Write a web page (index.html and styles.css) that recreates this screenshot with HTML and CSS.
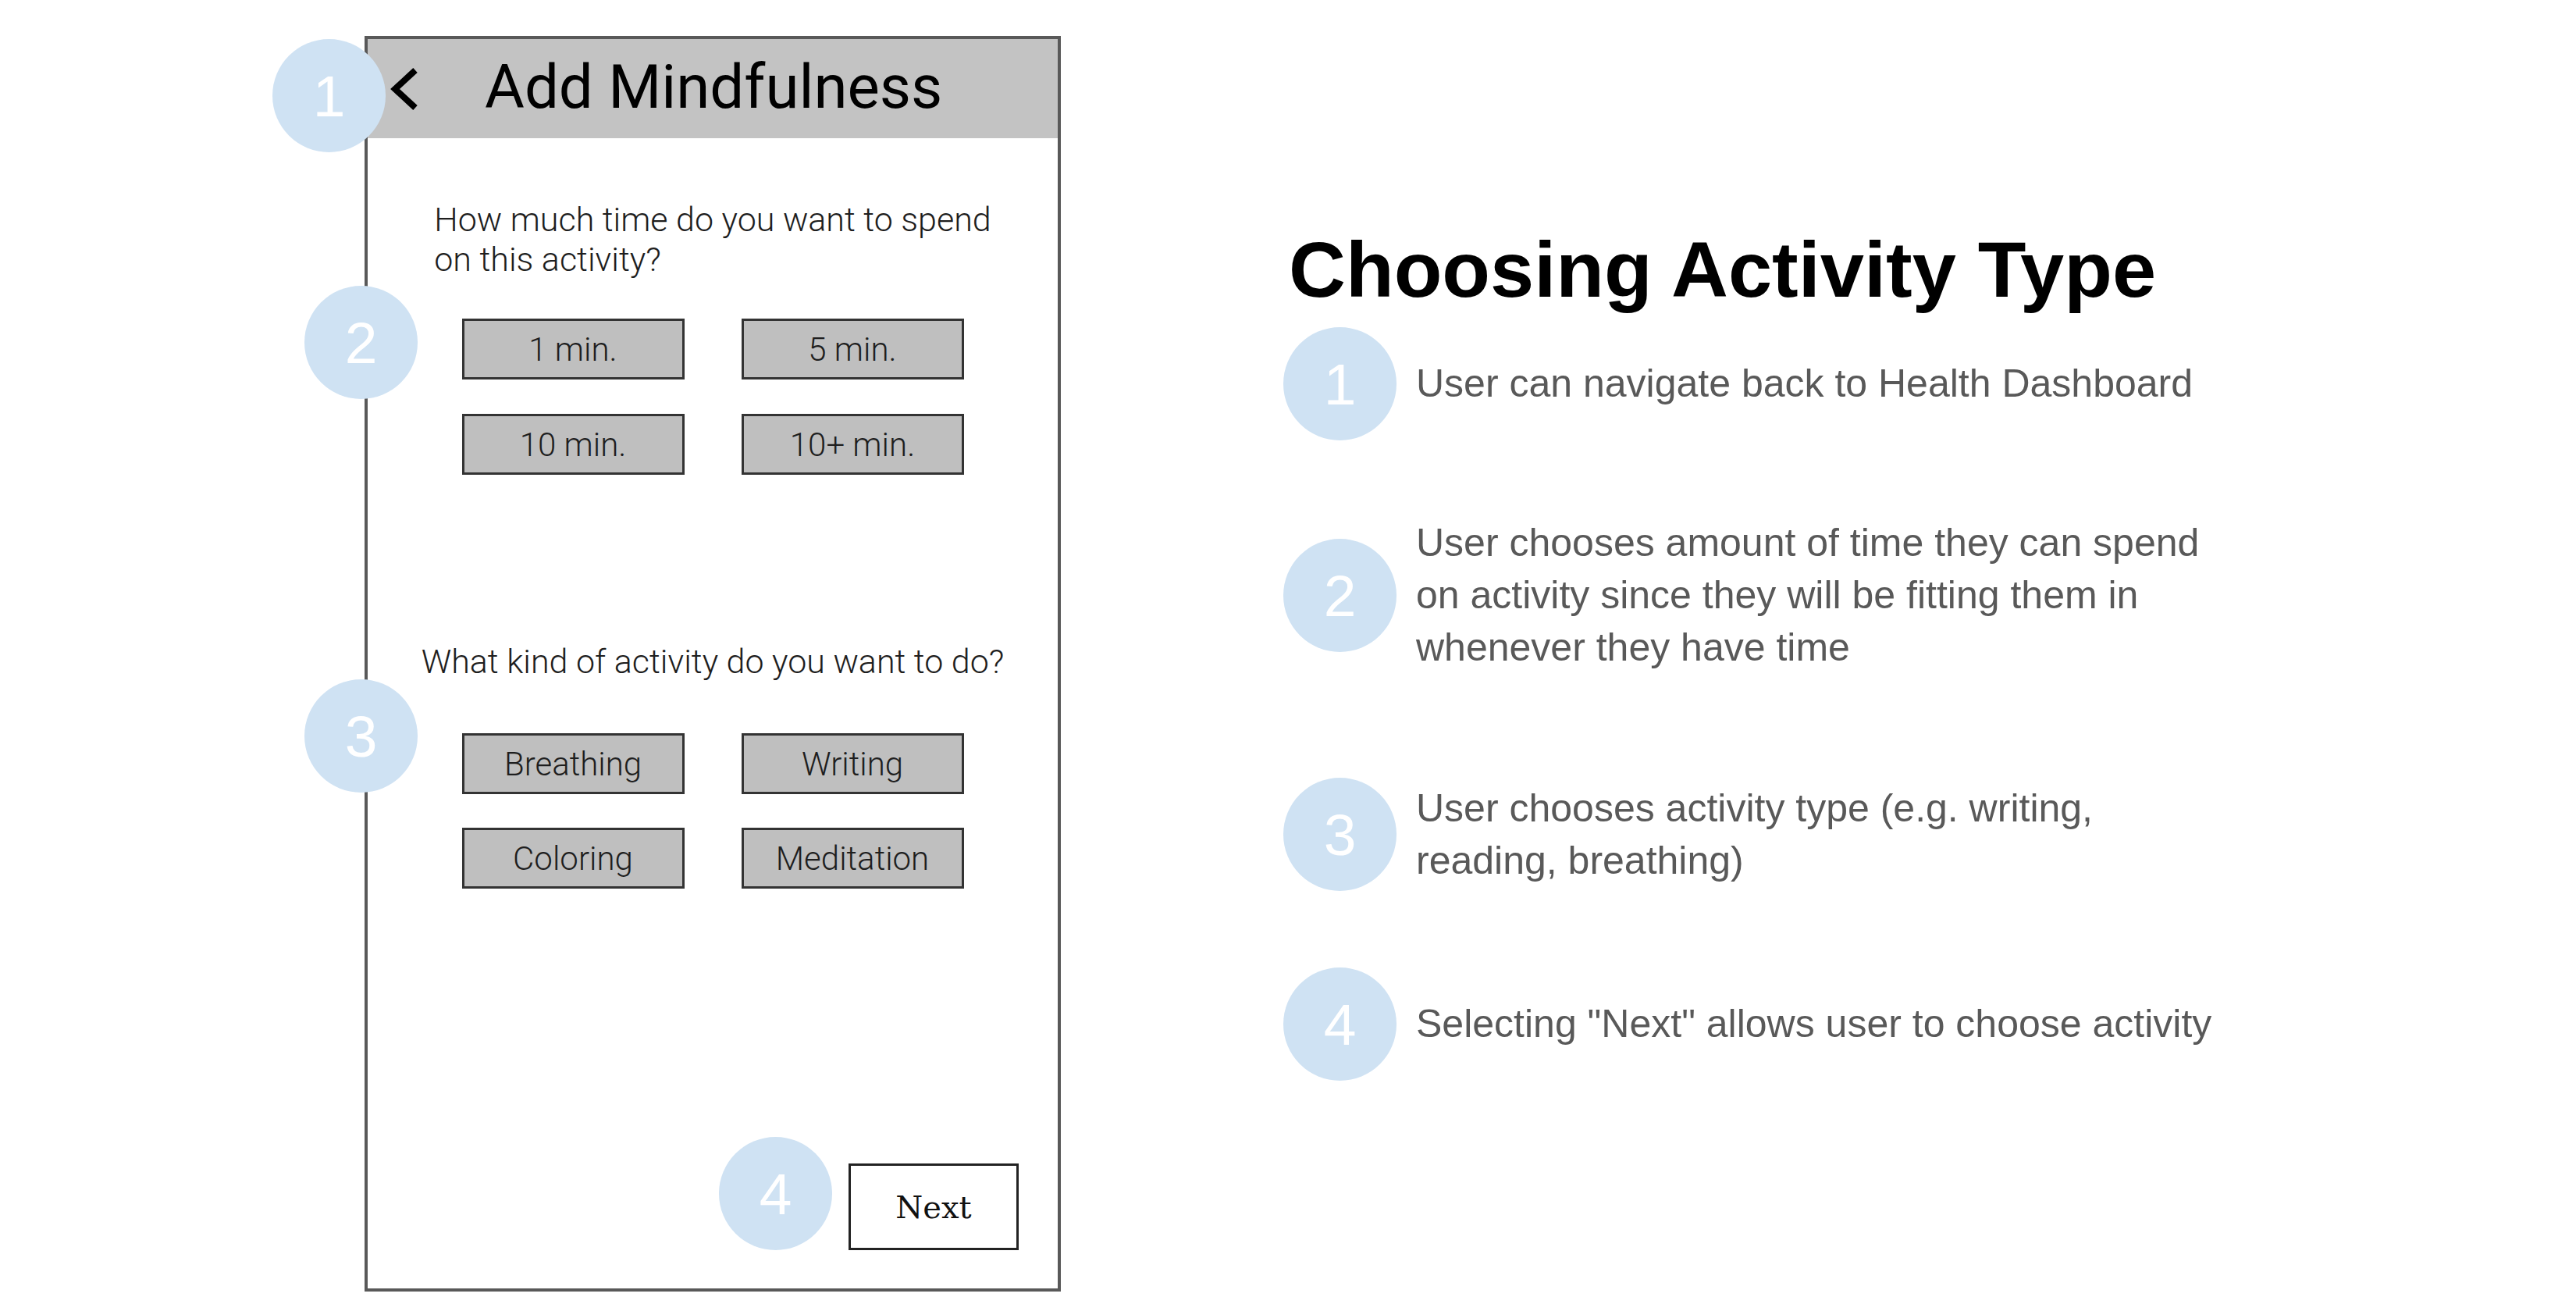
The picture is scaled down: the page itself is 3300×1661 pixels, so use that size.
FILE: index.html
```html
<!DOCTYPE html>
<html lang="en">
<head>
<meta charset="utf-8">
<title>Choosing Activity Type</title>
<link rel="stylesheet" href="styles.css">
</head>
<body>
<main class="page">
  <section class="phone">
    <header class="phone-header">
      <svg class="back" width="36" height="54" viewBox="0 0 36 54" aria-hidden="true">
        <polyline points="32,3 6,27 32,51" fill="none" stroke="#000" stroke-width="8" stroke-linejoin="miter"/>
      </svg>
      <h2 class="phone-title">Add Mindfulness</h2>
    </header>
    <div class="phone-body">
      <p class="question question-time">How much time do you want to spend<br>on this activity?</p>
      <div class="choices choices-time">
        <div class="choice">1 min.</div>
        <div class="choice">5 min.</div>
        <div class="choice">10 min.</div>
        <div class="choice">10+ min.</div>
      </div>
      <p class="question question-kind">What kind of activity do you want to do?</p>
      <div class="choices choices-kind">
        <div class="choice">Breathing</div>
        <div class="choice">Writing</div>
        <div class="choice">Coloring</div>
        <div class="choice">Meditation</div>
      </div>
      <div class="phone-footer">
        <div class="next-btn">Next</div>
      </div>
    </div>
    <span class="badge badge-1">1</span>
    <span class="badge badge-2">2</span>
    <span class="badge badge-3">3</span>
    <span class="badge badge-4">4</span>
  </section>

  <section class="notes">
    <h1 class="notes-title">Choosing Activity Type</h1>
    <ul class="steps">
      <li class="step">
        <span class="num">1</span>
        <p class="step-text">User can navigate back to Health Dashboard</p>
      </li>
      <li class="step">
        <span class="num">2</span>
        <p class="step-text">User chooses amount of time they can spend<br>on activity since they will be fitting them in<br>whenever they have time</p>
      </li>
      <li class="step step-spaced">
        <span class="num">3</span>
        <p class="step-text">User chooses activity type (e.g. writing,<br>reading, breathing)</p>
      </li>
      <li class="step">
        <span class="num">4</span>
        <p class="step-text">Selecting "Next" allows user to choose activity</p>
      </li>
    </ul>
  </section>
</main>
</body>
</html>
```

FILE: styles.css
```css
* {
  box-sizing: border-box;
}

html, body {
  margin: 0;
  padding: 0;
  background: #ffffff;
}

body {
  width: 3300px;
  height: 1661px;
  overflow: hidden;
  font-family: "Liberation Sans", Arial, sans-serif;
}

.page {
  display: flex;
  align-items: flex-start;
  padding: 46px 0 0 467px;
}

/* ---------- Phone mockup ---------- */

.phone {
  position: relative;
  width: 892px;
  height: 1608px;
  border: 4px solid #595959;
  background: #ffffff;
  display: flex;
  flex-direction: column;
}

.phone-header {
  height: 127px;
  background: #c3c3c3;
  display: flex;
  align-items: center;
  padding-left: 29px;
  flex-shrink: 0;
}

.back {
  display: block;
  flex-shrink: 0;
}

.phone-title {
  margin: 0 0 4px 85px;
  font-family: Roboto, "Liberation Sans", sans-serif;
  font-weight: 400;
  font-size: 78px;
  line-height: normal;
  color: #000000;
}

.phone-body {
  flex: 1;
  display: flex;
  flex-direction: column;
  align-items: center;
}

.question {
  margin: 0;
  font-family: Roboto, "Liberation Sans", sans-serif;
  font-weight: 300;
  font-size: 43px;
  line-height: 51px;
  color: #1e1e1e;
}

.question-time {
  margin-top: 79px;
}

.question-kind {
  margin-top: 214px;
}

.choices {
  display: grid;
  grid-template-columns: 285px 285px;
  column-gap: 73px;
}

.choices-time {
  margin-top: 50px;
  row-gap: 44px;
}

.choices-kind {
  margin-top: 66px;
  row-gap: 43px;
}

.choice {
  height: 78px;
  border: 3px solid #333333;
  background: #bfbfbf;
  display: flex;
  align-items: center;
  justify-content: center;
  font-family: Roboto, "Liberation Sans", sans-serif;
  font-weight: 300;
  font-size: 42px;
  color: #1e1e1e;
}

.phone-footer {
  margin-top: auto;
  align-self: stretch;
  display: flex;
  justify-content: flex-end;
  padding: 0 50px 49px 0;
}

.next-btn {
  width: 218px;
  height: 111px;
  border: 3px solid #222222;
  background: #ffffff;
  display: flex;
  align-items: center;
  justify-content: center;
  font-family: "DejaVu Serif", "Liberation Serif", serif;
  font-size: 40px;
  color: #111111;
}

/* ---------- Annotation badges ---------- */

.badge,
.num {
  width: 145px;
  height: 145px;
  border-radius: 50%;
  background: #cfe2f3;
  color: #ffffff;
  font-family: "Liberation Sans", Arial, sans-serif;
  font-size: 75px;
  display: flex;
  align-items: center;
  justify-content: center;
  flex-shrink: 0;
}

.badge {
  position: absolute;
}

.badge-1 { left: -122px; top: 0; }
.badge-2 { left: -81px; top: 316px; }
.badge-3 { left: -81px; top: 820px; }
.badge-4 { left: 450px; top: 1406px; }

/* ---------- Notes ---------- */

.notes {
  margin-left: 285px;
  padding-top: 249px;
}

.notes-title {
  margin: 0 0 0 7px;
  font-family: "Liberation Sans", Arial, sans-serif;
  font-weight: 700;
  font-size: 101px;
  line-height: 100px;
  color: #000000;
  white-space: nowrap;
}

.steps {
  list-style: none;
  margin: 24px 0 0 0;
  padding: 0;
  display: flex;
  flex-direction: column;
  gap: 98px;
}

.step {
  display: flex;
  align-items: center;
  gap: 25px;
}

.step-spaced {
  margin-top: 35px;
}

.step-text {
  margin: 0;
  font-family: "Liberation Sans", Arial, sans-serif;
  font-size: 50px;
  line-height: 67px;
  color: #595959;
  white-space: nowrap;
}
```
